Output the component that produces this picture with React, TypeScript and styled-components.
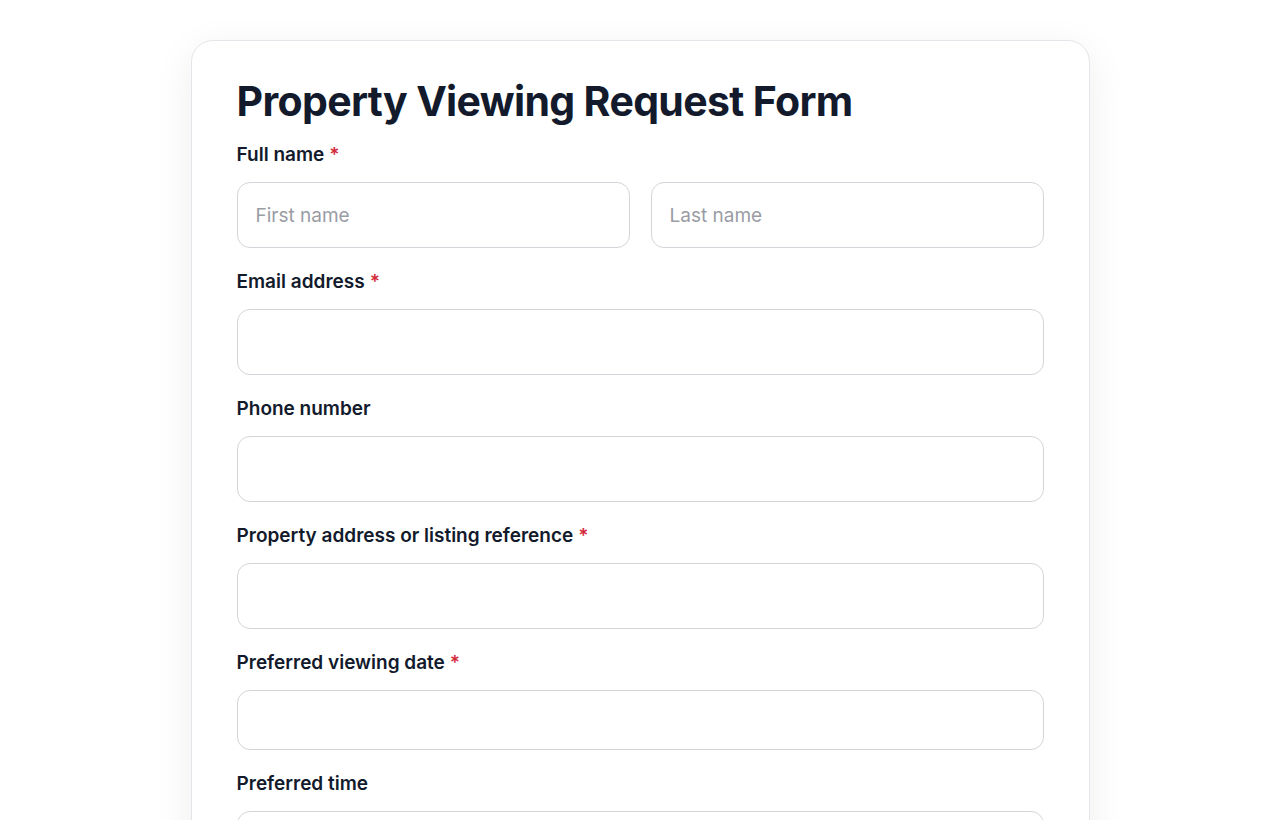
import React from "react";
import styled, { createGlobalStyle } from "styled-components";

const GlobalStyle = createGlobalStyle`
  body {
    margin: 0;
    background: #ffffff;
    font-family: Inter, "Noto Sans", "DejaVu Sans", sans-serif;
    color: #121a2c;
  }
  * { box-sizing: border-box; }
`;

const Page = styled.div`
  display: flex;
  justify-content: center;
  padding: 40px 0 60px;
`;

const Card = styled.form`
  width: 899px;
  background: #ffffff;
  border: 1px solid #e4e5ea;
  border-radius: 22px;
  box-shadow: 0 10px 40px rgba(20, 24, 40, 0.07);
  padding: 34px 45px 40px;
`;

const Title = styled.h1`
  margin: 0 0 15px;
  font-size: 41px;
  line-height: 52px;
  font-weight: 700;
  letter-spacing: -0.65px;
  color: #121a2c;
`;

const Field = styled.div`
  margin-bottom: 21px;
`;

const Label = styled.label`
  display: block;
  font-size: 19px;
  line-height: 26px;
  font-weight: 600;
  color: #121a2c;
  margin-bottom: 14px;
`;

const Required = styled.span`
  color: #d42a3a;
  margin-left: 5px;
`;

const Row = styled.div`
  display: grid;
  grid-template-columns: 1fr 1fr;
  gap: 21px;
`;

const Input = styled.input<{ $h?: number }>`
  display: block;
  width: 100%;
  height: ${(p) => p.$h ?? 66}px;
  border: 1px solid #d3d5da;
  border-radius: 13px;
  background: #ffffff;
  padding: 0 18px;
  font-family: inherit;
  font-size: 19px;
  color: #121a2c;
  outline: none;
  &::placeholder {
    color: #9a9ca4;
  }
`;

type FieldDef = { label: string; required?: boolean; h?: number };

const fields: FieldDef[] = [
  { label: "Email address", required: true },
  { label: "Phone number" },
  { label: "Property address or listing reference", required: true },
  { label: "Preferred viewing date", required: true, h: 60 },
  { label: "Preferred time", h: 60 },
];

export default function App() {
  return (
    <>
      <GlobalStyle />
      <Page>
        <Card onSubmit={(e) => e.preventDefault()}>
          <Title>Property Viewing Request Form</Title>
          <Field>
            <Label>
              Full name<Required>*</Required>
            </Label>
            <Row>
              <Input placeholder="First name" />
              <Input placeholder="Last name" />
            </Row>
          </Field>
          {fields.map((f) => (
            <Field key={f.label}>
              <Label>
                {f.label}
                {f.required && <Required>*</Required>}
              </Label>
              <Input $h={f.h} />
            </Field>
          ))}
        </Card>
      </Page>
    </>
  );
}
